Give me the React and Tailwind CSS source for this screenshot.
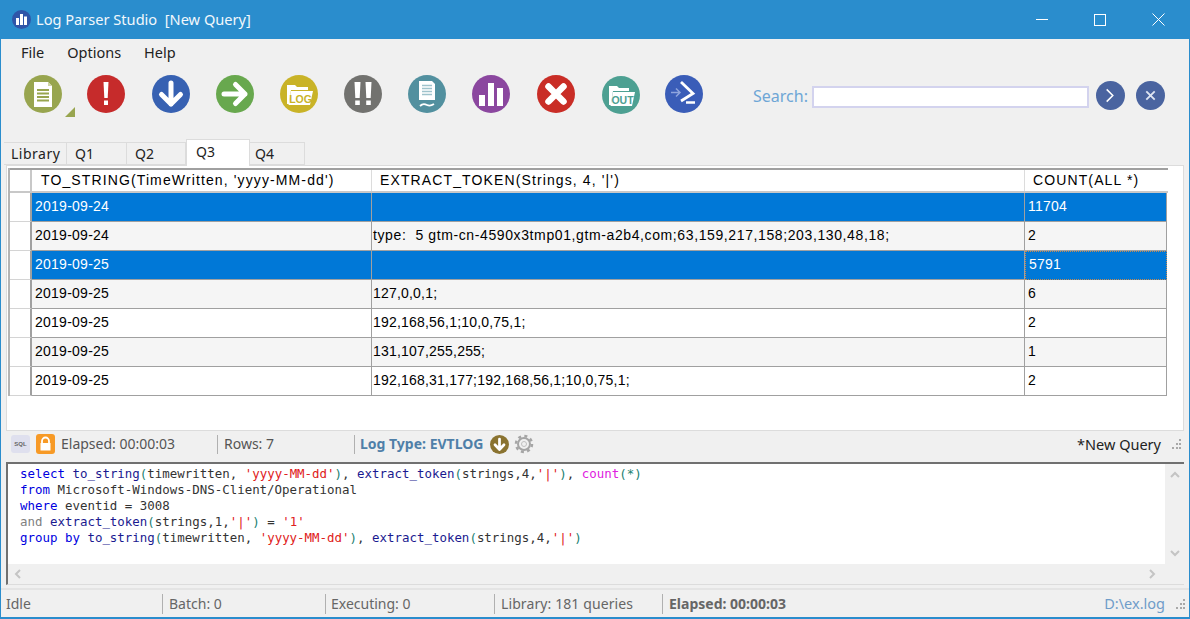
import React from "react";

const ui = "font-['Noto_Sans',sans-serif]";

function Circle({ color, className = "", children, size = 38 }) {
  return (
    <svg width={size} height={size} viewBox="0 0 38 38" className={`shrink-0 ${className}`}>
      <circle cx="19" cy="19" r="19" fill={color} />
      {children}
    </svg>
  );
}

function Grip() {
  return (
    <svg width="12" height="12" viewBox="0 0 12 12" className="shrink-0">
      {[[9, 1], [6, 5], [9, 5], [2, 9], [6, 9], [9, 9]].map(([x, y], i) => (
        <rect key={i} x={x} y={y} width="2" height="2" fill="#a8a8a8" />
      ))}
    </svg>
  );
}

function Toolbar() {
  return (
    <div className="flex h-[72px] shrink-0 items-start pt-[8px] pl-[23px]">
      <div className="relative">
        <Circle color="#98a54f">
          <path d="M10 7h14l4 4v21H10z" fill="#fff" />
          <path d="M24 7l4 4h-4z" fill="#cdd3a4" />
          <path d="M13 15h12M13 18.5h12M13 22h12M13 25.5h12" stroke="#98a54f" strokeWidth="2" />
        </Circle>
        <svg width="10" height="10" viewBox="0 0 10 10" className="absolute left-[41px] top-[32px]">
          <path d="M10 0v10H0z" fill="#98a54f" />
        </svg>
      </div>
      <Circle color="#c62b2b" className="ml-[25px]">
        <path d="M16.5 7h5l-.8 16h-3.4z" fill="#fff" />
        <rect x="17" y="25.5" width="4" height="4.5" fill="#fff" />
      </Circle>
      <Circle color="#3761b2" className="ml-[27px]">
        <path d="M19 8v21M9.5 19.5 19 29l9.5-9.5" fill="none" stroke="#fff" strokeWidth="5" strokeLinecap="round" strokeLinejoin="round" />
      </Circle>
      <Circle color="#68a84e" className="ml-[26px]">
        <path d="M8 19h21M19.5 9.5 29 19l-9.5 9.5" fill="none" stroke="#fff" strokeWidth="5" strokeLinecap="round" strokeLinejoin="round" />
      </Circle>
      <Circle color="#c9b327" className="ml-[26px]">
        <path d="M7 10h8l2 2h11v3H11L9 29H7z" fill="#fff" />
        <path d="M11 16h22l-3 14H8.5z" fill="#fff" />
        <text x="20.5" y="27.5" textAnchor="middle" fontSize="10.5" fontWeight="700" fontFamily="'Liberation Sans',sans-serif" fill="#c9b327">LOG</text>
      </Circle>
      <Circle color="#72726f" className="ml-[26px]">
        <path d="M10.5 7h6l-.8 16h-4.4zM21.5 7h6l-.8 16h-4.4z" fill="#fff" />
        <rect x="11.2" y="25.5" width="4.6" height="4.5" fill="#fff" />
        <rect x="22.2" y="25.5" width="4.6" height="4.5" fill="#fff" />
      </Circle>
      <Circle color="#52909f" className="ml-[26px]">
        <path d="M11 6h13l3 3v16H11z" fill="#fff" />
        <path d="M14 10.5h10M14 13.5h10M14 16.5h10M14 19.5h10" stroke="#9fc3cc" strokeWidth="1.5" />
        <path d="M12 31c3-3 5-2 7-1s4 1 7-1" fill="none" stroke="#fff" strokeWidth="1.8" />
      </Circle>
      <Circle color="#8b479f" className="ml-[26px]">
        <rect x="7" y="20" width="6" height="11" fill="#fff" />
        <rect x="16" y="8" width="6" height="23" fill="#fff" />
        <rect x="25" y="13" width="6" height="18" fill="#fff" />
      </Circle>
      <Circle color="#c92d26" className="ml-[27px]">
        <path d="M11.5 11.5l15 15M26.5 11.5l-15 15" stroke="#fff" strokeWidth="6.5" strokeLinecap="round" />
      </Circle>
      <Circle color="#4da092" className="ml-[27px] mt-[1px]">
        <path d="M7 10h8l2 2h10v3H11L9 29H7z" fill="#fff" />
        <path d="M11 16h22l-3 14H8.5z" fill="#fff" />
        <text x="20.5" y="27.5" textAnchor="middle" fontSize="10.5" fontWeight="700" fontFamily="'Liberation Sans',sans-serif" fill="#4da092">OUT</text>
      </Circle>
      <Circle color="#3a5db8" className="ml-[25px]">
        <path d="M16 7l12 11.5L16 26" fill="none" stroke="#fff" strokeWidth="2.8" />
        <path d="M21 27.5h9" stroke="#fff" strokeWidth="2.5" />
        <path d="M6 17.5h9M11 13.5l4 4-4 4" fill="none" stroke="#8fa5dd" strokeWidth="1.5" />
      </Circle>
      <div className="ml-[50px] flex items-start pt-[6px]">
        <span className="mt-[4px] w-[57px] whitespace-nowrap text-[16px] leading-[22px] text-[#6ea6d6]">Search:</span>
        <input aria-label="Search" className="ml-[2px] mt-[5px] h-[22px] w-[277px] border-2 border-[#d3d3ee] bg-white" />
        <Circle color="#4a64a0" size={29} className="ml-[7px]">
          <path d="M14 11l8 8-8 8" fill="none" stroke="#fff" strokeWidth="2" />
        </Circle>
        <Circle color="#4a64a0" size={29} className="ml-[11px]">
          <path d="M13.5 13.5l11 11M24.5 13.5l-11 11" stroke="#dfe5f2" strokeWidth="2.4" />
        </Circle>
      </div>
    </div>
  );
}

function Tabs() {
  const tab = "flex h-[23px] items-center border border-[#dcdcdc] border-l-0 text-[#222]";
  return (
    <div className="flex h-[26px] shrink-0 items-end pl-[3px] text-[14px] leading-none">
      <div className={`${tab} w-[63px] border-l pl-[7px] tracking-[0.5px]`}>Library</div>
      <div className={`${tab} w-[60px] pl-[8px]`}>Q1</div>
      <div className={`${tab} w-[59px] pl-[8px]`}>Q2</div>
      <div className="z-10 mb-[-1px] flex h-[27px] w-[64px] items-start border-x border-t border-[#dcdcdc] bg-white pl-[9px] pt-[5px] text-[#222]">Q3</div>
      <div className={`${tab} w-[55px] pl-[5px]`}>Q4</div>
    </div>
  );
}

const rows = [
  { date: "2019-09-24", tok: "", n: "11704", sel: true },
  { date: "2019-09-24", tok: "type:  5 gtm-cn-4590x3tmp01,gtm-a2b4,com;63,159,217,158;203,130,48,18;", n: "2", alt: true, wide: true },
  { date: "2019-09-25", tok: "", n: "5791", sel: true, focus: true },
  { date: "2019-09-25", tok: "127,0,0,1;", n: "6", alt: true },
  { date: "2019-09-25", tok: "192,168,56,1;10,0,75,1;", n: "2" },
  { date: "2019-09-25", tok: "131,107,255,255;", n: "1", alt: true },
  { date: "2019-09-25", tok: "192,168,31,177;192,168,56,1;10,0,75,1;", n: "2" },
];

function Grid() {
  return (
    <div className="mx-[5px] h-[266px] shrink-0 border border-[#dcdcdc] bg-white pt-[2px] pl-px">
      <div className="w-[1160px] border-l-2 border-[#b4b4b4] font-['Liberation_Sans',sans-serif] text-[14px] leading-none tracking-[0.25px] text-black">
        <div className="flex h-[25px] border-y-2 border-t-[#a0a0a0] border-b-[#c8c8c8] tracking-[1.12px]">
          <div className="w-[22px] shrink-0 border-r-2 border-[#c8c8c8]" />
          <div className="flex w-[340px] items-center border-r border-[#dcdcdc] pb-[1px] pl-[9px]">TO_STRING(TimeWritten, 'yyyy-MM-dd')</div>
          <div className="flex w-[653px] items-center border-r border-[#dcdcdc] pb-[1px] pl-[8px]">EXTRACT_TOKEN(Strings, 4, '|')</div>
          <div className="flex w-[142px] items-center pb-[1px] pl-[8px]">COUNT(ALL *)</div>
        </div>
        {rows.map((r, i) => {
          const bg = r.sel ? "bg-[#0078d7] text-white" : r.alt ? "bg-[#f5f5f5]" : "";
          return (
            <div key={i} className="flex h-[29px]">
              <div className="w-[22px] shrink-0 border-r-2 border-b border-r-[#a0a0a0] border-b-[#d4d4d4]" />
              <div className={`flex w-[340px] items-center border-r border-b border-[#a0a0a0] pb-[3px] pl-[3px] ${bg}`}>{r.date}</div>
              <div className={`flex w-[653px] items-center border-r border-b border-[#a0a0a0] pb-[3px] pl-[1px] whitespace-pre ${r.wide ? "tracking-[0.61px]" : "tracking-[0.2px]"} ${bg}`}>{r.tok}</div>
              <div className={`flex w-[142px] items-center border-b border-r border-[#a0a0a0] pb-[3px] pl-[3px] ${bg} ${r.focus ? "border border-dotted border-[#c88a50] pl-[2px]" : ""}`}>{r.n}</div>
            </div>
          );
        })}
      </div>
    </div>
  );
}

function Strip() {
  return (
    <div className="flex h-[31px] shrink-0 items-center pb-[5px] pl-[10px] pr-[7px] text-[14px] leading-none">
      <div className="flex h-[18px] w-[19px] items-center justify-center rounded-[3px] bg-[#dfe0ee] font-['Liberation_Sans'] text-[6px] font-bold text-[#666]">SQL</div>
      <svg width="19" height="20" viewBox="0 0 19 20" className="ml-[6px] shrink-0">
        <rect width="19" height="20" rx="3" fill="#f79a26" />
        <path d="M6 9V7a3.5 3.5 0 0 1 7 0v2" fill="none" stroke="#fff" strokeWidth="1.8" />
        <rect x="4.5" y="9" width="10" height="7.5" fill="#fff" />
      </svg>
      <span className="ml-[6px] w-[156px] text-[#555]">Elapsed: 00:00:03</span>
      <div className="h-[19px] w-px bg-[#b0b0b0]" />
      <span className="ml-[6px] w-[130px] text-[#555]">Rows: 7</span>
      <div className="h-[19px] w-px bg-[#b0b0b0]" />
      <span className="ml-[5px] font-bold text-[#4f7fa8]">Log Type: EVTLOG</span>
      <Circle color="#8a7330" size={19} className="ml-[7px]">
        <path d="M19 8v21M10 19.5 19 29l9-9.5" fill="none" stroke="#fff" strokeWidth="5.5" strokeLinecap="round" strokeLinejoin="round" />
      </Circle>
      <svg width="20" height="20" viewBox="0 0 20 20" className="ml-[5px] shrink-0">
        <circle cx="10" cy="10" r="6" fill="none" stroke="#a5a5a5" strokeWidth="2" />
        <circle cx="10" cy="10" r="8" fill="none" stroke="#a5a5a5" strokeWidth="2.5" strokeDasharray="3 3.3" />
        <circle cx="10" cy="10" r="2.5" fill="none" stroke="#c0c0c0" strokeWidth="1" />
      </svg>
      <span className="ml-auto mr-[9px] text-[14.5px] text-[#222]">*New Query</span>
      <Grip />
    </div>
  );
}

const B = ({ children }) => <span className="text-[#0000e0]">{children}</span>;
const F = ({ children }) => <span className="text-[#1a1a90]">{children}</span>;
const P = ({ children }) => <span className="text-[#208070]">{children}</span>;
const S = ({ children }) => <span className="text-[#e02020]">{children}</span>;

function Editor() {
  return (
    <div className="mx-[5px] h-[123px] shrink-0 border-l-2 border-t-2 border-b border-b-[#dcdcdc] border-l-[#707070] border-t-[#707070] bg-[#f0f0f0]">
      <div className="flex h-[100px]">
        <pre className="flex-1 bg-white pl-[12px] pt-[2px] font-['DejaVu_Sans_Mono',monospace] text-[12.45px] leading-[16px] text-[#333]">
          <B>select</B> <F>to_string</F><P>(</P>timewritten, <S>'yyyy-MM-dd'</S><P>)</P>, <F>extract_token</F><P>(</P>strings,4,<S>'|'</S><P>)</P>, <span className="text-[#e020e0]">count</span><P>(*)</P>{"\n"}
          <B>from</B> Microsoft-Windows-DNS-Client/Operational{"\n"}
          <B>where</B> eventid = 3008{"\n"}
          <span className="text-[#808080]">and</span> <F>extract_token</F><P>(</P>strings,1,<S>'|'</S><P>)</P> = <S>'1'</S>{"\n"}
          <B>group by</B> <F>to_string</F><P>(</P>timewritten, <S>'yyyy-MM-dd'</S><P>)</P>, <F>extract_token</F><P>(</P>strings,4,<S>'|'</S><P>)</P>
        </pre>
        <div className="flex w-[19px] flex-col items-center justify-between py-[7px]">
          <svg width="10" height="7" viewBox="0 0 10 7"><path d="M1 6l4-4 4 4" fill="none" stroke="#c4c4c4" strokeWidth="2" /></svg>
          <svg width="10" height="7" viewBox="0 0 10 7"><path d="M1 1l4 4 4-4" fill="none" stroke="#c4c4c4" strokeWidth="2" /></svg>
        </div>
      </div>
      <div className="flex h-[20px] items-center justify-between pl-[6px] pr-[28px]">
        <svg width="7" height="10" viewBox="0 0 7 10"><path d="M6 1L2 5l4 4" fill="none" stroke="#c4c4c4" strokeWidth="2" /></svg>
        <svg width="7" height="10" viewBox="0 0 7 10"><path d="M1 1l4 4-4 4" fill="none" stroke="#c4c4c4" strokeWidth="2" /></svg>
      </div>
    </div>
  );
}

function StatusBar() {
  return (
    <div className="mt-[3px] flex h-[29px] shrink-0 items-center border-t-2 border-[#e4e4e4] pl-[5px] pr-[3px] text-[14px] leading-none text-[#666]">
      <span className="w-[156px]">Idle</span>
      <div className="h-[20px] w-px bg-[#b0b0b0]" />
      <span className="ml-[6px] w-[156px]">Batch: 0</span>
      <div className="h-[20px] w-px bg-[#b0b0b0]" />
      <span className="ml-[5px] w-[163px]">Executing: 0</span>
      <div className="h-[20px] w-px bg-[#b0b0b0]" />
      <span className="ml-[6px] w-[161px] tracking-[0.1px]">Library: 181 queries</span>
      <div className="h-[20px] w-px bg-[#b0b0b0]" />
      <span className="ml-[6px] font-bold">Elapsed: 00:00:03</span>
      <span className="ml-auto mr-[9px] text-[14.5px] text-[#6f9cc9]">D:\ex.log</span>
      <Grip />
    </div>
  );
}

export default function App() {
  return (
    <div className={`flex h-[619px] w-[1190px] flex-col overflow-hidden border-x border-b-2 border-[#2a8dcd] bg-[#f0f0f0] ${ui}`}>
      <div className="flex h-[39px] shrink-0 items-center bg-[#2a8dcd] text-white">
        <svg width="19" height="19" viewBox="0 0 19 19" className="ml-[11px] shrink-0">
          <circle cx="9.5" cy="9.5" r="9.5" fill="#2f55a8" />
          <rect x="4" y="8" width="3" height="7" fill="#fff" />
          <rect x="8" y="4" width="3" height="11" fill="#fff" />
          <rect x="12" y="6.5" width="3" height="8.5" fill="#fff" />
        </svg>
        <span className="ml-[5px] whitespace-pre text-[14.6px] leading-none text-[#f2f8fc]">Log Parser Studio  [New Query]</span>
        <div className="ml-auto flex items-center pr-[24px]">
          <svg width="12" height="2" viewBox="0 0 12 2"><rect width="12" height="1" fill="#fff" /></svg>
          <svg width="12" height="12" viewBox="0 0 12 12" className="ml-[46px]"><rect x="0.5" y="0.5" width="11" height="11" fill="none" stroke="#fff" /></svg>
          <svg width="13" height="13" viewBox="0 0 13 13" className="ml-[46px]"><path d="M.5.5l12 12M12.5.5l-12 12" stroke="#fff" /></svg>
        </div>
      </div>
      <div className="flex h-[28px] shrink-0 items-center pl-[20px] pb-[1px] text-[14.5px] leading-none text-[#222]">
        <span>File</span>
        <span className="ml-[23px]">Options</span>
        <span className="ml-[23px]">Help</span>
      </div>
      <Toolbar />
      <Tabs />
      <Grid />
      <Strip />
      <Editor />
      <StatusBar />
    </div>
  );
}
